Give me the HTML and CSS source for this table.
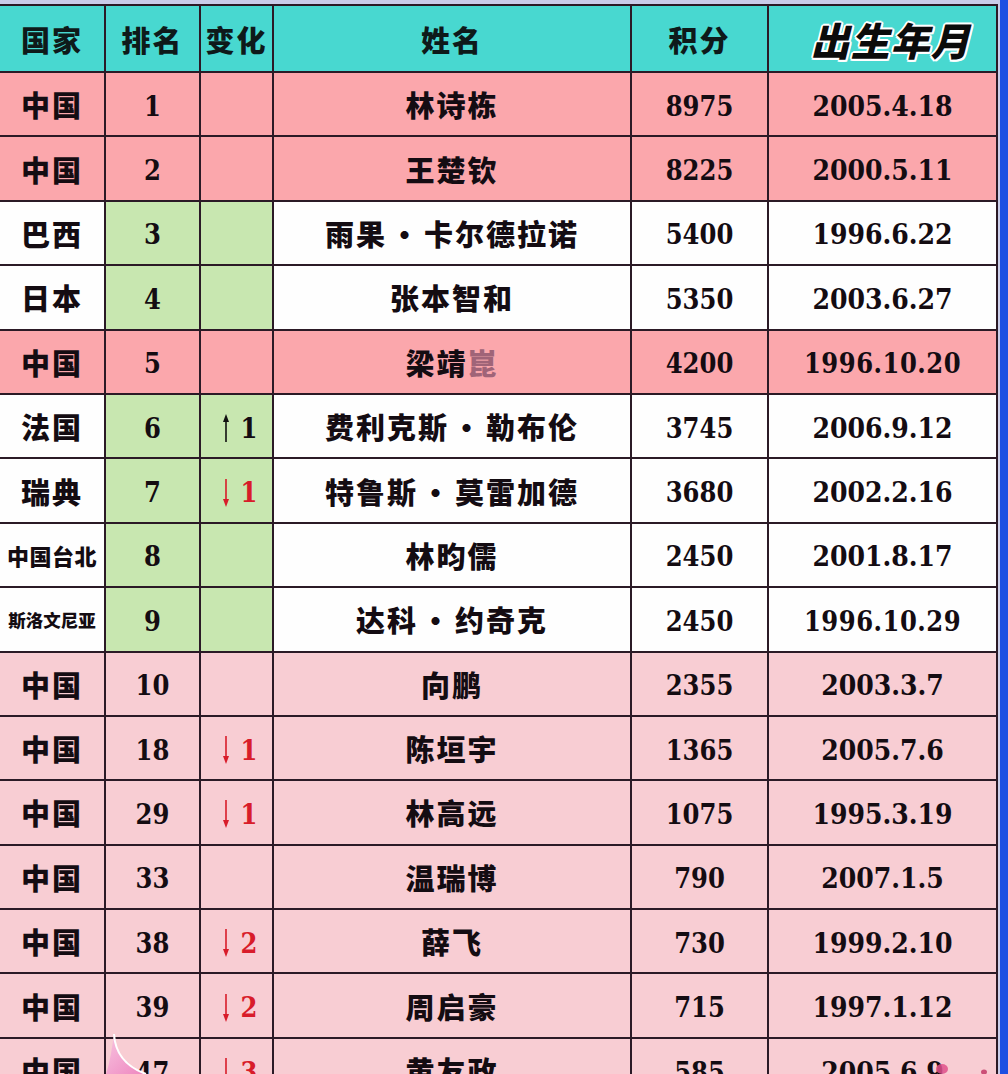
FILE: index.html
```html
<!DOCTYPE html>
<html lang="zh-CN">
<head>
<meta charset="utf-8">
<title>排名</title>
<link rel="stylesheet" href="styles.css">
</head>
<body>
<div class="screen">
  <div class="sheet">
    <div class="table">
      <div class="row head">
        <div class="cell zh">国家</div>
        <div class="cell zh">排名</div>
        <div class="cell zh">变化</div>
        <div class="cell zh">姓名</div>
        <div class="cell zh">积分</div>
        <div class="cell zh"><span class="title">出生年月</span></div>
      </div>

      <div class="row hot">
        <div class="cell zh">中国</div>
        <div class="cell num">1</div>
        <div class="cell chg"></div>
        <div class="cell zh name">林诗栋</div>
        <div class="cell num">8975</div>
        <div class="cell num date">2005.4.18</div>
      </div>
      <div class="row hot">
        <div class="cell zh">中国</div>
        <div class="cell num">2</div>
        <div class="cell chg"></div>
        <div class="cell zh name">王楚钦</div>
        <div class="cell num">8225</div>
        <div class="cell num date">2000.5.11</div>
      </div>
      <div class="row intl">
        <div class="cell zh">巴西</div>
        <div class="cell num rank">3</div>
        <div class="cell chg"></div>
        <div class="cell zh name">雨果<span class="sep">·</span>卡尔德拉诺</div>
        <div class="cell num">5400</div>
        <div class="cell num date">1996.6.22</div>
      </div>
      <div class="row intl">
        <div class="cell zh">日本</div>
        <div class="cell num rank">4</div>
        <div class="cell chg"></div>
        <div class="cell zh name">张本智和</div>
        <div class="cell num">5350</div>
        <div class="cell num date">2003.6.27</div>
      </div>
      <div class="row hot">
        <div class="cell zh">中国</div>
        <div class="cell num">5</div>
        <div class="cell chg"></div>
        <div class="cell zh name">梁靖<span class="faded">崑</span></div>
        <div class="cell num">4200</div>
        <div class="cell num date long">1996.10.20</div>
      </div>
      <div class="row intl">
        <div class="cell zh">法国</div>
        <div class="cell num rank">6</div>
        <div class="cell chg">
          <svg class="arrow" viewBox="0 0 8 30" width="8" height="30"><line x1="4" y1="29" x2="4" y2="6" stroke="#111" stroke-width="1.6"/><polygon points="1,9 4,1 7,9" fill="#111"/></svg>
          <span class="num">1</span>
        </div>
        <div class="cell zh name">费利克斯<span class="sep">·</span>勒布伦</div>
        <div class="cell num">3745</div>
        <div class="cell num date">2006.9.12</div>
      </div>
      <div class="row intl">
        <div class="cell zh">瑞典</div>
        <div class="cell num rank">7</div>
        <div class="cell chg down">
          <svg class="arrow" viewBox="0 0 8 30" width="8" height="30"><line x1="4" y1="1" x2="4" y2="24" stroke="#d81c2a" stroke-width="1.6"/><polygon points="1,21 4,29 7,21" fill="#d81c2a"/></svg>
          <span class="num">1</span>
        </div>
        <div class="cell zh name">特鲁斯<span class="sep">·</span>莫雷加德</div>
        <div class="cell num">3680</div>
        <div class="cell num date">2002.2.16</div>
      </div>
      <div class="row intl">
        <div class="cell zh c4">中国台北</div>
        <div class="cell num rank">8</div>
        <div class="cell chg"></div>
        <div class="cell zh name">林昀儒</div>
        <div class="cell num">2450</div>
        <div class="cell num date">2001.8.17</div>
      </div>
      <div class="row intl">
        <div class="cell zh c5">斯洛文尼亚</div>
        <div class="cell num rank">9</div>
        <div class="cell chg"></div>
        <div class="cell zh name">达科<span class="sep">·</span>约奇克</div>
        <div class="cell num">2450</div>
        <div class="cell num date long">1996.10.29</div>
      </div>
      <div class="row soft">
        <div class="cell zh">中国</div>
        <div class="cell num">10</div>
        <div class="cell chg"></div>
        <div class="cell zh name">向鹏</div>
        <div class="cell num">2355</div>
        <div class="cell num date">2003.3.7</div>
      </div>
      <div class="row soft">
        <div class="cell zh">中国</div>
        <div class="cell num">18</div>
        <div class="cell chg down">
          <svg class="arrow" viewBox="0 0 8 30" width="8" height="30"><line x1="4" y1="1" x2="4" y2="24" stroke="#d81c2a" stroke-width="1.6"/><polygon points="1,21 4,29 7,21" fill="#d81c2a"/></svg>
          <span class="num">1</span>
        </div>
        <div class="cell zh name">陈垣宇</div>
        <div class="cell num">1365</div>
        <div class="cell num date">2005.7.6</div>
      </div>
      <div class="row soft">
        <div class="cell zh">中国</div>
        <div class="cell num">29</div>
        <div class="cell chg down">
          <svg class="arrow" viewBox="0 0 8 30" width="8" height="30"><line x1="4" y1="1" x2="4" y2="24" stroke="#d81c2a" stroke-width="1.6"/><polygon points="1,21 4,29 7,21" fill="#d81c2a"/></svg>
          <span class="num">1</span>
        </div>
        <div class="cell zh name">林高远</div>
        <div class="cell num">1075</div>
        <div class="cell num date">1995.3.19</div>
      </div>
      <div class="row soft">
        <div class="cell zh">中国</div>
        <div class="cell num">33</div>
        <div class="cell chg"></div>
        <div class="cell zh name">温瑞博</div>
        <div class="cell num">790</div>
        <div class="cell num date">2007.1.5</div>
      </div>
      <div class="row soft">
        <div class="cell zh">中国</div>
        <div class="cell num">38</div>
        <div class="cell chg down">
          <svg class="arrow" viewBox="0 0 8 30" width="8" height="30"><line x1="4" y1="1" x2="4" y2="24" stroke="#d81c2a" stroke-width="1.6"/><polygon points="1,21 4,29 7,21" fill="#d81c2a"/></svg>
          <span class="num">2</span>
        </div>
        <div class="cell zh name">薛飞</div>
        <div class="cell num">730</div>
        <div class="cell num date">1999.2.10</div>
      </div>
      <div class="row soft">
        <div class="cell zh">中国</div>
        <div class="cell num">39</div>
        <div class="cell chg down">
          <svg class="arrow" viewBox="0 0 8 30" width="8" height="30"><line x1="4" y1="1" x2="4" y2="24" stroke="#d81c2a" stroke-width="1.6"/><polygon points="1,21 4,29 7,21" fill="#d81c2a"/></svg>
          <span class="num">2</span>
        </div>
        <div class="cell zh name">周启豪</div>
        <div class="cell num">715</div>
        <div class="cell num date">1997.1.12</div>
      </div>
      <div class="row soft">
        <div class="cell zh">中国</div>
        <div class="cell num">47</div>
        <div class="cell chg down">
          <svg class="arrow" viewBox="0 0 8 30" width="8" height="30"><line x1="4" y1="1" x2="4" y2="24" stroke="#d81c2a" stroke-width="1.6"/><polygon points="1,21 4,29 7,21" fill="#d81c2a"/></svg>
          <span class="num">3</span>
        </div>
        <div class="cell zh name">黄友政</div>
        <div class="cell num">585</div>
        <div class="cell num date">2005.6.9</div>
      </div>
    </div>
  </div>
  <div class="edge"></div>
</div>

<svg class="swoosh" viewBox="0 0 60 44" width="60" height="44">
  <defs>
    <linearGradient id="sw" x1="0" y1="0" x2="1" y2="1">
      <stop offset="0" stop-color="#f8c4e0"/>
      <stop offset="1" stop-color="#ee86bf"/>
    </linearGradient>
  </defs>
  <path d="M14 4 C15 22 24 36 46 44 L6 44 C10 32 12 18 14 4 Z" fill="url(#sw)"/>
  <path d="M14 4 C15 22 24 36 46 44" fill="none" stroke="#ffffff" stroke-width="2"/>
</svg>
<svg class="blob" viewBox="0 0 70 16" width="70" height="16">
  <ellipse cx="18" cy="11" rx="6" ry="5" fill="#e0508a" opacity="0.85"/>
  <ellipse cx="60" cy="14" rx="3" ry="2.5" fill="#c03060" opacity="0.8"/>
</svg>
</body>
</html>
```

FILE: styles.css
```css
html, body {
  margin: 0;
  padding: 0;
}

body {
  width: 1008px;
  height: 1074px;
  overflow: hidden;
  position: relative;
  background: #c7cbe8;
}

.screen {
  display: flex;
  width: 1008px;
}

.sheet {
  width: 1000px;
  padding-top: 4px;
  background: #c9cde9;
}

.edge {
  width: 8px;
  background: #1d4fe2;
}

.table {
  display: grid;
  grid-template-columns: 104px 93px 71px 356px 135px 227px;
  grid-template-rows: 65px;
  grid-auto-rows: 62.4px;
  gap: 2px;
  width: 996px;
  background: #2b1a26;
  border-top: 2px solid #2b1a26;
  border-right: 2px solid #2b1a26;
}

.row {
  display: contents;
}

.cell {
  display: flex;
  align-items: center;
  justify-content: center;
  overflow: hidden;
  white-space: nowrap;
  color: #140c12;
}

.zh {
  font-family: "Noto Sans CJK SC", "Noto Sans", sans-serif;
  font-weight: 900;
  font-size: 29px;
  letter-spacing: 2px;
}

.num {
  font-family: "DejaVu Serif Condensed", "DejaVu Serif", serif;
  font-stretch: condensed;
  font-weight: 700;
  font-size: 27px;
}

.cell.num {
  padding-top: 4px;
}

.date {
  font-size: 28px;
  letter-spacing: 0;
}

.date.long {
  font-size: 27px;
  letter-spacing: 0.5px;
}

.c4 {
  font-size: 22px;
  letter-spacing: 0.5px;
}

.c5 {
  font-size: 17.5px;
  letter-spacing: 0;
}

.sep {
  margin: 0 3px;
}

.faded {
  color: #a06478;
}

.row.head > .cell {
  background: #48d8d0;
  color: #0e1a1a;
}

.title {
  font-style: italic;
  font-weight: 900;
  font-size: 39px;
  letter-spacing: 1px;
  color: #0b0b0b;
  margin-left: 16px;
  text-shadow:
    2px 0 0 #fff, -2px 0 0 #fff, 0 2px 0 #fff, 0 -2px 0 #fff,
    1.5px 1.5px 0 #fff, -1.5px -1.5px 0 #fff, 1.5px -1.5px 0 #fff, -1.5px 1.5px 0 #fff;
}

.row.hot > .cell {
  background: #fba7ac;
}

.row.intl > .cell {
  background: #fefefe;
}

.row.intl > .cell.rank,
.row.intl > .cell.chg {
  background: #c8e7b0;
}

.row.soft > .cell {
  background: #f8cdd3;
}

.chg {
  gap: 11px;
  padding-left: 6px;
}

.chg .num {
  font-size: 27px;
  padding-top: 4px;
}

.chg.down .num {
  color: #d81c2a;
}

.arrow {
  display: block;
  margin-top: 4px;
}

.swoosh {
  position: absolute;
  left: 100px;
  top: 1030px;
}

.blob {
  position: absolute;
  left: 924px;
  top: 1058px;
}
```
